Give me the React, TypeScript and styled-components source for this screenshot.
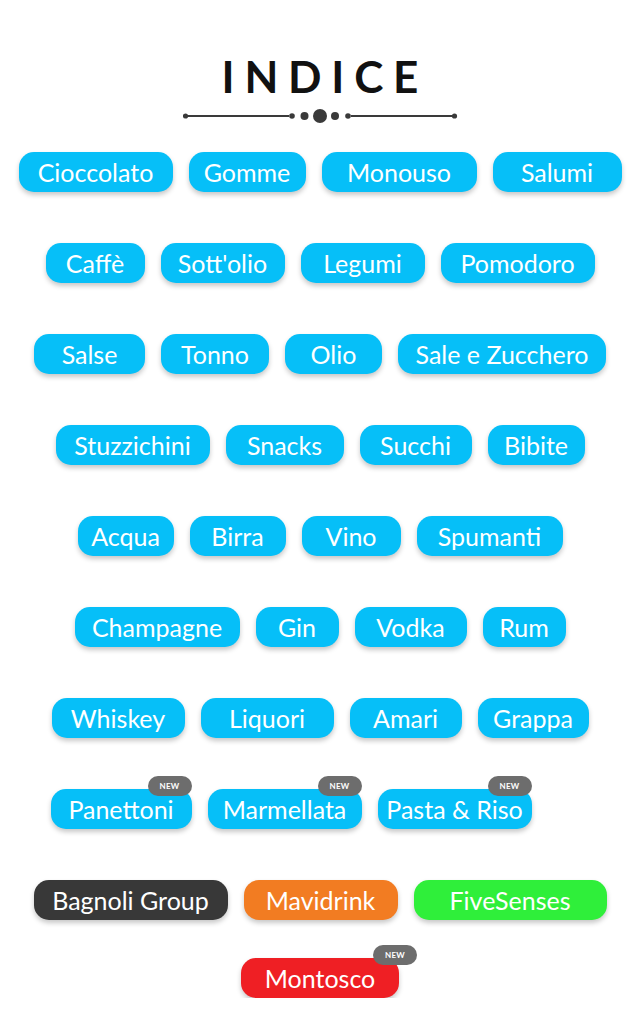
import React from "react";
import styled, { createGlobalStyle } from "styled-components";

const Global = createGlobalStyle`
  html, body { margin: 0; padding: 0; background: #ffffff; }
  body { font-family: "Lato", "Noto Sans", sans-serif; }
`;

const Page = styled.main`
  width: 640px;
  display: flex;
  flex-direction: column;
  align-items: center;
  padding-top: 51px;
`;

const Title = styled.h1`
  margin: 0;
  font-family: "Lato", sans-serif;
  font-weight: 700;
  font-size: 44px;
  line-height: 50px;
  letter-spacing: 9.8px;
  padding-left: 9.8px;
  color: #111111;
`;

const DividerSvg = styled.svg`
  display: block;
  margin-top: 7px;
  margin-left: 2px;
`;

const Rows = styled.div`
  display: flex;
  flex-direction: column;
  align-items: center;
  margin-top: 28px;
  gap: 51px;
`;

const Row = styled.div<{ $shift?: number; $top?: number }>`
  display: flex;
  justify-content: center;
  gap: 16px;
  height: 40px;
  margin-right: ${(p) => (p.$shift ? p.$shift * 2 : 0)}px;
  margin-top: ${(p) => p.$top ?? 0}px;
`;

const Pill = styled.div<{ $w: number; $bg: string; $font: string }>`
  position: relative;
  box-sizing: border-box;
  width: ${(p) => p.$w}px;
  height: 40px;
  border-radius: 15px;
  background: ${(p) => p.$bg};
  color: #ffffff;
  font-family: ${(p) => p.$font};
  font-size: 25px;
  display: flex;
  align-items: center;
  justify-content: center;
  box-shadow: 0 3px 5px rgba(0, 0, 0, 0.22);
  white-space: nowrap;
`;

const Badge = styled.span<{ $out: number }>`
  position: absolute;
  top: -13px;
  right: ${(p) => -p.$out}px;
  width: 44px;
  height: 20px;
  border-radius: 10px;
  background: #6d6d6d;
  color: #ffffff;
  font-family: "Lato", sans-serif;
  font-weight: 700;
  font-size: 8px;
  display: flex;
  align-items: center;
  justify-content: center;
  letter-spacing: 0.2px;
`;

type Item = { t: string; w: number; isNew?: boolean };

const BLUE = "#06bff8";
const CAT_FONT = `"Lato", "Open Sans", sans-serif`;

const categories: { items: Item[]; shift?: number }[] = [
  { items: [{ t: "Cioccolato", w: 154 }, { t: "Gomme", w: 117 }, { t: "Monouso", w: 155 }, { t: "Salumi", w: 129 }] },
  { items: [{ t: "Caffè", w: 99 }, { t: "Sott'olio", w: 124 }, { t: "Legumi", w: 124 }, { t: "Pomodoro", w: 154 }] },
  { items: [{ t: "Salse", w: 111 }, { t: "Tonno", w: 108 }, { t: "Olio", w: 97 }, { t: "Sale e Zucchero", w: 208 }] },
  { items: [{ t: "Stuzzichini", w: 154 }, { t: "Snacks", w: 118 }, { t: "Succhi", w: 112 }, { t: "Bibite", w: 97 }] },
  { items: [{ t: "Acqua", w: 96 }, { t: "Birra", w: 96 }, { t: "Vino", w: 99 }, { t: "Spumanti", w: 146 }] },
  { items: [{ t: "Champagne", w: 165 }, { t: "Gin", w: 83 }, { t: "Vodka", w: 112 }, { t: "Rum", w: 83 }] },
  { items: [{ t: "Whiskey", w: 133 }, { t: "Liquori", w: 133 }, { t: "Amari", w: 112 }, { t: "Grappa", w: 111 }] },
  {
    items: [
      { t: "Panettoni", w: 141, isNew: true },
      { t: "Marmellata", w: 154, isNew: true },
      { t: "Pasta & Riso", w: 154, isNew: true },
    ],
    shift: 29,
  },
];

const brands = [
  { t: "Bagnoli Group", w: 194, bg: "#383838" },
  { t: "Mavidrink", w: 154, bg: "#f27c22" },
  { t: "FiveSenses", w: 193, bg: "#2fef3a" },
];

function Divider() {
  return (
    <DividerSvg width="276" height="16" viewBox="0 0 276 16">
      <line x1="2" y1="8" x2="106" y2="8" stroke="#3a3a3a" strokeWidth="2" />
      <line x1="168" y1="8" x2="272" y2="8" stroke="#3a3a3a" strokeWidth="2" />
      <circle cx="2.5" cy="8" r="2.6" fill="#3a3a3a" />
      <circle cx="271.5" cy="8" r="2.6" fill="#3a3a3a" />
      <circle cx="109" cy="8" r="2.8" fill="#3a3a3a" />
      <circle cx="121.5" cy="8" r="4" fill="#3a3a3a" />
      <circle cx="137" cy="8" r="7" fill="#3a3a3a" />
      <circle cx="152" cy="8" r="4" fill="#3a3a3a" />
      <circle cx="165" cy="8" r="2.8" fill="#3a3a3a" />
    </DividerSvg>
  );
}

export default function App() {
  return (
    <>
      <Global />
      <Page>
        <Title>INDICE</Title>
        <Divider />
        <Rows>
          {categories.map((row, i) => (
            <Row key={i} $shift={row.shift}>
              {row.items.map((it) => (
                <Pill key={it.t} $w={it.w} $bg={BLUE} $font={CAT_FONT}>
                  {it.t}
                  {it.isNew && <Badge $out={0}>NEW</Badge>}
                </Pill>
              ))}
            </Row>
          ))}
          <Row>
            {brands.map((b) => (
              <Pill key={b.t} $w={b.w} $bg={b.bg} $font={`"Lato", sans-serif`}>
                {b.t}
              </Pill>
            ))}
          </Row>
          <Row $top={-13}>
            <Pill $w={158} $bg="#ef1f24" $font={`"Lato", sans-serif`}>
              Montosco
              <Badge $out={18}>NEW</Badge>
            </Pill>
          </Row>
        </Rows>
      </Page>
    </>
  );
}
